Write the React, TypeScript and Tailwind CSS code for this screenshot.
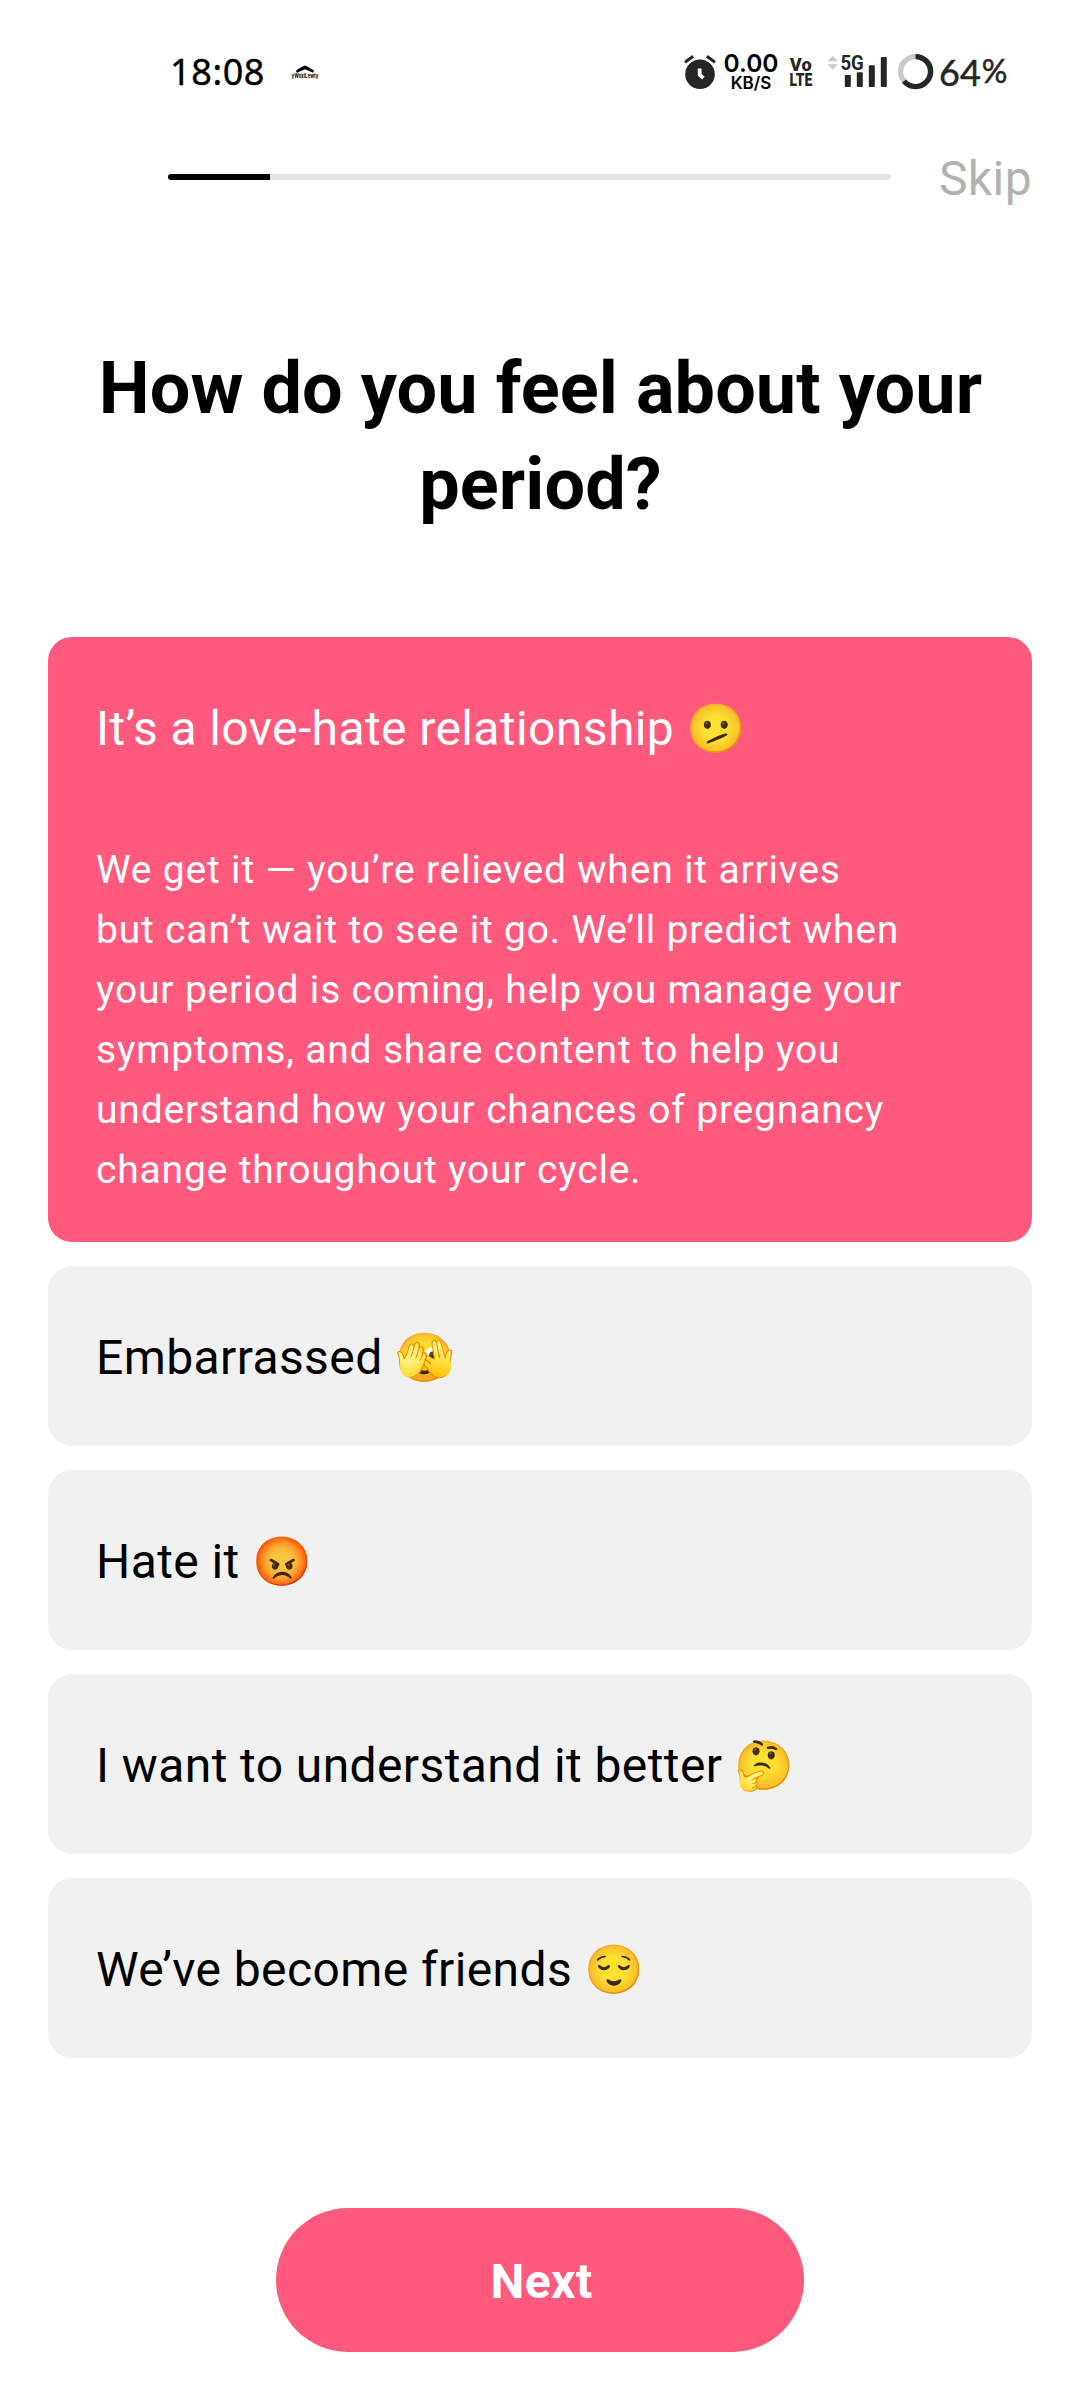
import React from 'react';

const options = [
  { label: 'Embarrassed', emoji: '🫣' },
  { label: 'Hate it', emoji: '😡' },
  { label: 'I want to understand it better', emoji: '🤔' },
  { label: 'We’ve become friends', emoji: '😌' },
];

const detailLines = [
  'We get it — you’re relieved when it arrives',
  'but can’t wait to see it go. We’ll predict when',
  'your period is coming, help you manage your',
  'symptoms, and share content to help you',
  'understand how your chances of pregnancy',
  'change throughout your cycle.',
];

function CarrierLogo() {
  return (
    <svg className="h-10 w-[34px] shrink-0 overflow-visible" viewBox="-2 0 34 40">
      <path d="M6 18.8 C9 16.4 12 15 15 13.6 C18 15 21 16.4 24 18.8 L23.2 20.8 C20.4 19.4 17.6 18.6 15 17.2 C12.4 18.6 9.6 19.4 6.8 20.8 Z" fill="#000" />
      <text x="1.5" y="25.5" fontSize="5.5" fontWeight="700" fontFamily="Inter, sans-serif" textLength="27" lengthAdjust="spacingAndGlyphs">
        yWoxlLewty
      </text>
    </svg>
  );
}

function AlarmIcon() {
  return (
    <svg className="ml-[362px] h-10 w-[34px] shrink-0" viewBox="0 0 34 40" fill="none">
      <circle cx="16" cy="22.3" r="14.8" fill="#262626" />
      <path d="M1 10.2 9.2 4.2 M31 10.2 22.8 4.2" stroke="#262626" strokeWidth="3" />
      <path d="M15.7 16.5 V22.6 L19.4 26.2" stroke="#fff" strokeWidth="3.8" />
    </svg>
  );
}

function VolteIcon() {
  return (
    <svg className="ml-1 h-10 w-7 shrink-0 overflow-visible" viewBox="-2 0 28 40" fill="#262626" fontFamily="Roboto, sans-serif" fontWeight="900" fontSize="18.5">
      <text x="1.8" y="18.7" textLength="21.8" lengthAdjust="spacingAndGlyphs">Vo</text>
      <text x="1.6" y="34.4" textLength="22.6" lengthAdjust="spacingAndGlyphs">LTE</text>
    </svg>
  );
}

function SignalIcon() {
  return (
    <svg className="ml-3 h-10 w-16 shrink-0" viewBox="0 0 64 40" fill="#262626">
      <path d="M1.3 9.2 6.7 3.7 12 9.2Z M1.3 12.2 6.7 17.7 12 12.2Z" fill="#cacaca" />
      <text x="14.4" y="17.5" fontFamily="Roboto, sans-serif" fontWeight="700" fontSize="20.5" textLength="23.4" lengthAdjust="spacingAndGlyphs">
        5G
      </text>
      <rect x="18.8" y="23" width="6" height="12" rx="1" />
      <rect x="30.8" y="20.3" width="6" height="14.7" rx="1" />
      <rect x="42.8" y="13.2" width="6" height="21.8" rx="1" />
      <rect x="54.8" y="5" width="6" height="30" rx="1" />
    </svg>
  );
}

function BatteryRing() {
  return (
    <svg className="ml-1.5 h-10 w-10 shrink-0" viewBox="0 0 40 40" fill="none" strokeWidth="5.4">
      <circle cx="19.6" cy="19.6" r="15" stroke="#cacaca" />
      <circle cx="19.6" cy="19.6" r="15" stroke="#262626" pathLength="100" strokeDasharray="64 36" transform="rotate(-90 19.6 19.6)" />
    </svg>
  );
}

function StatusBar() {
  return (
    <div className="mt-[52px] flex h-10 items-center pl-[170px]">
      <div className="w-[118px] shrink-0 font-['Noto_Sans',sans-serif] text-[36px] leading-10 font-normal tracking-[0.6px] [-webkit-text-stroke:0.4px_black]">18:08</div>
      <CarrierLogo />
      <AlarmIcon />
      <div className="ml-0.5 flex h-10 w-[62px] shrink-0 flex-col items-center font-[Inter,sans-serif] font-semibold">
        <span className="h-[22px] text-[24.5px] leading-[23px]">0.00</span>
        <span className="h-[18px] text-[17px] leading-[18px]">KB/S</span>
      </div>
      <VolteIcon />
      <SignalIcon />
      <BatteryRing />
      <div className="ml-[3px] flex font-[Lato,sans-serif] text-[36px] leading-[39px] text-[#262626] [-webkit-text-stroke:0.5px_#262626]">
        <span>64</span>
        <span className="pl-px text-[32px] leading-9">%</span>
      </div>
    </div>
  );
}

function OptionTitle({ label, emoji }: { label: string; emoji: string }) {
  return (
    <div className="h-[72px] text-[48px] leading-[72px] tracking-[0.4px] whitespace-nowrap">
      {label} {emoji}
    </div>
  );
}

export default function App() {
  return (
    <div className="flex h-[2400px] w-[1080px] flex-col overflow-hidden bg-white font-[Roboto,'Noto_Color_Emoji',sans-serif] text-black">
      <StatusBar />

      <div className="mt-[52px] flex h-[66px] items-center justify-between pr-12 pl-[168px]">
        <div className="h-1.5 w-[723px] overflow-hidden rounded-full bg-[#e4e4e4]">
          <div className="h-full w-[102px] bg-black" />
        </div>
        <button className="pt-[3px] text-[48px] leading-[60px] tracking-[0.4px] text-[#b2b2b2]">Skip</button>
      </div>

      <h1 className="mt-[131px] pl-px text-center text-[72px] leading-[96px] font-bold tracking-[0.1px]">
        How do you feel about your
        <br />
        period?
      </h1>

      <div className="mt-[104px] flex flex-col gap-6 px-12">
        <div className="h-[605px] rounded-3xl bg-[#ff5a7d] px-12 pt-14 text-white">
          <OptionTitle label="It’s a love-hate relationship" emoji="🫤" />
          <p className="mt-[75px] text-[39px] leading-[60px] tracking-[0.82px] whitespace-nowrap">
            {detailLines.map((line) => (
              <span key={line} className="block">
                {line}
              </span>
            ))}
          </p>
        </div>
        {options.map((option) => (
          <div key={option.label} className="h-[180px] rounded-3xl bg-[#f1f1f1] px-12 pt-14">
            <OptionTitle label={option.label} emoji={option.emoji} />
          </div>
        ))}
      </div>

      <button className="mx-auto mt-[150px] flex h-36 w-[528px] items-center justify-center rounded-full bg-[#ff5a7d] pt-[3px] pl-[3px] text-[48px] font-bold tracking-[0.4px] text-white">
        Next
      </button>
    </div>
  );
}
